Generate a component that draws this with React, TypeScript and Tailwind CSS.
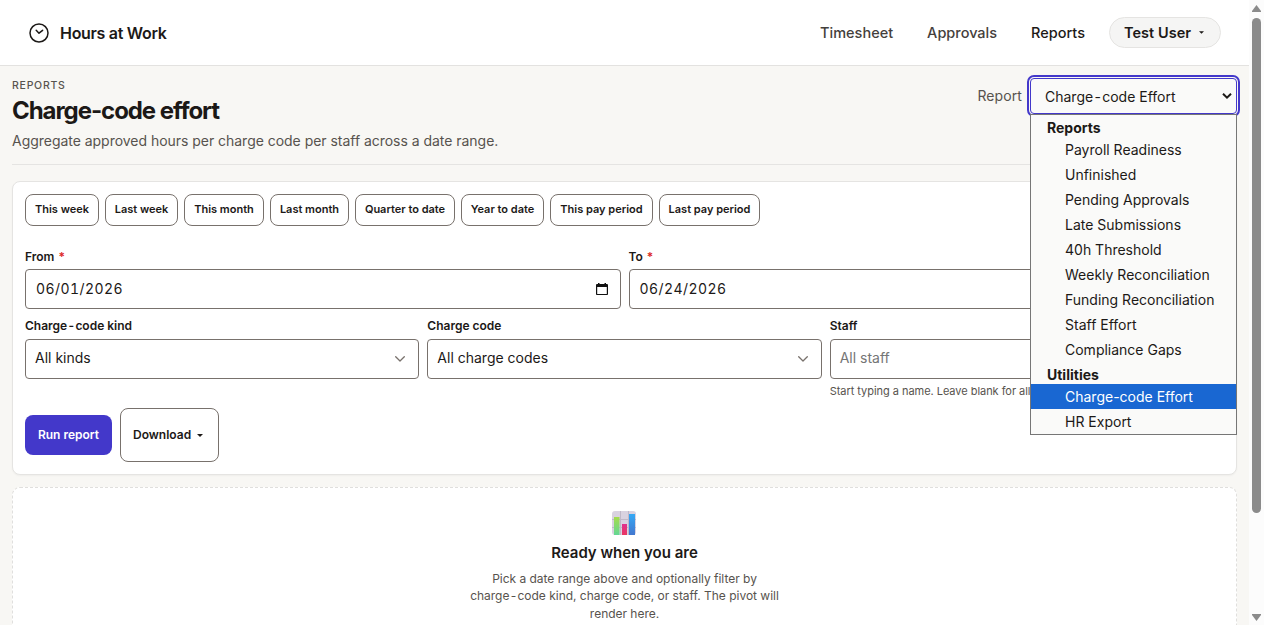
import { clsx } from "clsx";

const NAV_LINKS = [
  { label: "Timesheet", active: false },
  { label: "Approvals", active: false },
  { label: "Reports", active: true },
];

const PRESETS = [
  { label: "This week", width: "w-[74px]" },
  { label: "Last week", width: "w-[73px]" },
  { label: "This month", width: "w-[80px]" },
  { label: "Last month", width: "w-[79px]" },
  { label: "Quarter to date", width: "w-[100px]" },
  { label: "Year to date", width: "w-[83px]" },
  { label: "This pay period", width: "w-[103px]" },
  { label: "Last pay period", width: "w-[101px]" },
];

const REPORT_GROUPS = [
  {
    label: "Reports",
    options: [
      "Payroll Readiness",
      "Unfinished",
      "Pending Approvals",
      "Late Submissions",
      "40h Threshold",
      "Weekly Reconciliation",
      "Funding Reconciliation",
      "Staff Effort",
      "Compliance Gaps",
    ],
  },
  { label: "Utilities", options: ["Charge-code Effort", "HR Export"] },
];

const SELECTED = "Charge-code Effort";

function WideHyphen() {
  return <span className="mx-[1.3px]">-</span>;
}

function ClockLogo() {
  return (
    <svg className="h-5 w-5" viewBox="0 0 20 20" fill="none" stroke="#1c1917" strokeWidth="1.5">
      <circle cx="10" cy="10" r="9" />
      <path d="M7.200 7.300 10 10.200 13.600 7.300" strokeLinecap="round" strokeLinejoin="round" />
    </svg>
  );
}

function Caret({ className }: { className: string }) {
  return (
    <svg className={className} viewBox="0 0 6 3" fill="#1c1917">
      <path d="M0 0h6L3 3z" />
    </svg>
  );
}

function SelectChevron() {
  return (
    <svg className="mt-[2px] h-[6px] w-[10px]" viewBox="0 0 10 6" fill="none" stroke="#78716c" strokeWidth="1.3">
      <path d="M.7.7 5 5 9.3.7" strokeLinecap="round" strokeLinejoin="round" />
    </svg>
  );
}

function CalendarIcon() {
  return (
    <svg className="mb-px h-3 w-3" viewBox="0 0 12 12">
      <path d="M2 0h1.500v1h5V0H10v1h.8c.7 0 1.200.4 1.200 1.100v8.800c0 .7-.5 1.100-1.200 1.100H1.200C.5 12 0 11.600 0 10.900V2.100C0 1.400.5 1 1.200 1H2zM1.200 4v6.900h9.600V4z" fill="#111" fillRule="evenodd" />
    </svg>
  );
}

function BarChartEmoji() {
  return (
    <svg className="mr-[2px] h-6 w-6" viewBox="0 0 24 24">
      <defs>
        <linearGradient id="green" x1="0" y1="0" x2="0" y2="1">
          <stop offset="0" stopColor="#a5dc4c" />
          <stop offset="1" stopColor="#63d795" />
        </linearGradient>
        <linearGradient id="pink" x1="0" y1="0" x2="0" y2="1">
          <stop offset="0" stopColor="#e0308f" />
          <stop offset="1" stopColor="#e93761" />
        </linearGradient>
        <linearGradient id="blue" x1="0" y1="0" x2="0" y2="1">
          <stop offset="0" stopColor="#35a9f5" />
          <stop offset="1" stopColor="#4377cf" />
        </linearGradient>
      </defs>
      <rect width="24" height="24" rx="3" fill="#d9d2e0" />
      <path d="M8.500 0v24M16.500 0v24M0 8.500h24M0 16.500h24" stroke="#c0b8c8" strokeWidth="1" />
      <rect x="2" y="6" width="5.500" height="18" fill="url(#green)" />
      <rect x="10" y="13" width="5" height="11" fill="url(#pink)" />
      <rect x="17" y="3" width="6" height="21" fill="url(#blue)" />
    </svg>
  );
}

function Header() {
  return (
    <header className="flex h-[66px] items-center justify-between border-b border-[#e3e2e0] bg-white pr-7 pl-[29px]">
      <div className="flex items-center gap-[11px]">
        <ClockLogo />
        <span className="text-[16px] font-semibold tracking-[-0.3px]">Hours at Work</span>
      </div>
      <nav className="flex items-center text-[14.5px] font-medium">
        {NAV_LINKS.map((link) => (
          <a
            key={link.label}
            className={clsx("mr-[34px] pt-px last-of-type:mr-6", link.active ? "text-[#1c1917]" : "text-[#44403c]")}
          >
            {link.label}
          </a>
        ))}
        <button className="flex h-[31px] w-28 items-center gap-[8px] rounded-full border border-[#e5e4e2] bg-[#f5f5f4] pl-[14px] font-semibold">
          <span className="pt-px tracking-[0.04px]">Test User</span>
          <Caret className="h-[3px] w-[5px]" />
        </button>
      </nav>
    </header>
  );
}

function ReportMenu() {
  return (
    <div className="absolute top-9 left-0 z-10 w-[207px] border border-[#767676] bg-[#fafaf9] text-[14px]">
      {REPORT_GROUPS.map((group) => (
        <div key={group.label}>
          <div className="h-[22px] pt-[2px] pl-4 leading-[22px] font-bold">{group.label}</div>
          {group.options.map((option) => (
            <div
              key={option}
              className={clsx("h-[25px] pl-[34px] leading-[25px]", option === SELECTED && "bg-[#1967d2] text-white")}
            >
              {option}
            </div>
          ))}
        </div>
      ))}
    </div>
  );
}

function PageHeading() {
  return (
    <div className="flex h-[99px] justify-between border-b border-[#e5e4e2]">
      <div className="pt-3">
        <p className="text-[10.5px] leading-4 font-medium tracking-[0.75px] text-[#57534e]">REPORTS</p>
        <h1 className="mt-px text-[24px] leading-8 font-bold tracking-[-1.06px]">Charge-code effort</h1>
        <p className="mt-[4px] text-[14px] leading-5 tracking-[-0.03px] text-[#57534e]">
          Aggregate approved hours per charge code per staff across a date range.
        </p>
      </div>
      <div className="flex items-start gap-2 pt-3">
        <label className="pt-2 text-[14px] leading-5 tracking-[0.1px] text-[#57534e]">Report</label>
        <div className="relative">
          <button className="flex h-9 w-[207px] items-center justify-between rounded-[4px] border border-[#4338ca] bg-[#fafaf9] pr-1 pl-[14px] text-[14px] outline-2 outline-offset-1 outline-[#4338ca]">
            <span className="pt-px">
              Charge
              <WideHyphen />
              code Effort
            </span>
            <svg className="h-[6px] w-[10px]" viewBox="0 0 10 6" fill="none" stroke="#1c1917" strokeWidth="2">
              <path d="M1 .7 5 4.600 9 .7" />
            </svg>
          </button>
          <ReportMenu />
        </div>
      </div>
    </div>
  );
}

function DateField({ label, value }: { label: string; value: string }) {
  return (
    <div>
      <label className="block text-[12px] leading-4 font-semibold">
        {label} <span className="ml-px text-[#dc2626]">*</span>
      </label>
      <div className="mt-1 flex h-10 items-center justify-between rounded-[4px] border border-[#78716c] bg-white pr-3 pl-[10px] text-[14px]">
        <span className="pb-[2px] tracking-[0.43px] tabular-nums">{value}</span>
        <CalendarIcon />
      </div>
    </div>
  );
}

function Filters() {
  return (
    <section className="mt-4 h-[294px] rounded-lg border border-[#e5e4e2] bg-white p-3 shadow-[0_1px_2px_rgba(0,0,0,0.04)]">
      <div className="flex gap-[6px]">
        {PRESETS.map((preset) => (
          <button
            key={preset.label}
            className={clsx(
              "h-8 rounded-lg border border-[#78716c] pb-[2px] text-[11px] font-semibold whitespace-nowrap",
              preset.width
            )}
          >
            {preset.label}
          </button>
        ))}
      </div>
      <div className="mt-[23px] grid grid-cols-2 gap-2">
        <DateField label="From" value="06/01/2026" />
        <DateField label="To" value="06/24/2026" />
      </div>
      <div className="mt-[9px] grid grid-cols-3 gap-2 text-[14px]">
        <div>
          <label className="block text-[12px] leading-4 font-semibold">
            Charge
            <WideHyphen />
            code kind
          </label>
          <div className="mt-[5px] flex h-10 items-center justify-between rounded-[4px] border border-[#78716c] pr-[13px] pb-[3px] pl-[9px]">
            All kinds
            <SelectChevron />
          </div>
        </div>
        <div>
          <label className="block text-[12px] leading-4 font-semibold">Charge code</label>
          <div className="mt-[5px] flex h-10 items-center justify-between rounded-[4px] border border-[#78716c] pr-[13px] pb-[3px] pl-[9px]">
            All charge codes
            <SelectChevron />
          </div>
        </div>
        <div>
          <label className="block text-[12px] leading-4 font-semibold">Staff</label>
          <div className="mt-[5px] flex h-10 items-center rounded-[4px] border border-[#78716c] pb-[3px] pl-[9px] text-[#757575]">
            All staff
          </div>
          <p className="mt-1 text-[11px] leading-4 tracking-[-0.04px] text-[#57534e]">
            Start typing a name. Leave blank for all staff.
          </p>
        </div>
      </div>
      <div className="mt-[9px] flex items-center gap-2 text-[12px] font-semibold">
        <button className="h-10 w-[87px] rounded-lg bg-[#4338ca] text-white">Run report</button>
        <button className="flex h-[54px] w-[99px] items-center gap-[6px] rounded-lg border border-[#78716c] pl-3">
          Download
          <Caret className="h-[3px] w-[6px]" />
        </button>
      </div>
    </section>
  );
}

function EmptyState() {
  return (
    <section className="mt-3 flex h-[200px] flex-col items-center rounded-lg border border-dashed border-[#e0dfdd] bg-white pt-[23px] text-center">
      <BarChartEmoji />
      <h2 className="mt-[8px] text-[15px] leading-5 font-semibold">Ready when you are</h2>
      <p className="mt-[7px] text-[12px] leading-[17.4px] tracking-[-0.02px] text-[#57534e]">
        Pick a date range above and optionally filter by
        <br />
        charge
        <WideHyphen />
        code kind, charge code, or staff. The pivot will
        <br />
        render here.
      </p>
    </section>
  );
}

function Scrollbar() {
  return (
    <div className="flex w-[15px] flex-col items-center justify-between bg-[#fcfcfc]">
      <svg className="mt-[5px] h-[7px] w-[9px]" viewBox="0 0 9 7" fill="#8b8b8b">
        <path d="M4.500 0 9 6v1H0V6z" />
      </svg>
      <div className="mt-[6px] h-[495px] w-[9px] rounded-full bg-[#8b8b8b]" />
      <svg className="mt-auto mb-[4px] h-[7px] w-[9px]" viewBox="0 0 9 7" fill="#8b8b8b">
        <path d="M4.500 7 9 1V0H0v1z" />
      </svg>
    </div>
  );
}

export default function App() {
  return (
    <div className="flex h-[625px] w-[1264px] overflow-hidden bg-[#f8f7f4] font-['Inter',sans-serif] text-[#1c1917]">
      <div className="w-[1249px] shrink-0">
        <Header />
        <main className="px-3">
          <PageHeading />
          <Filters />
          <EmptyState />
        </main>
      </div>
      <Scrollbar />
    </div>
  );
}
